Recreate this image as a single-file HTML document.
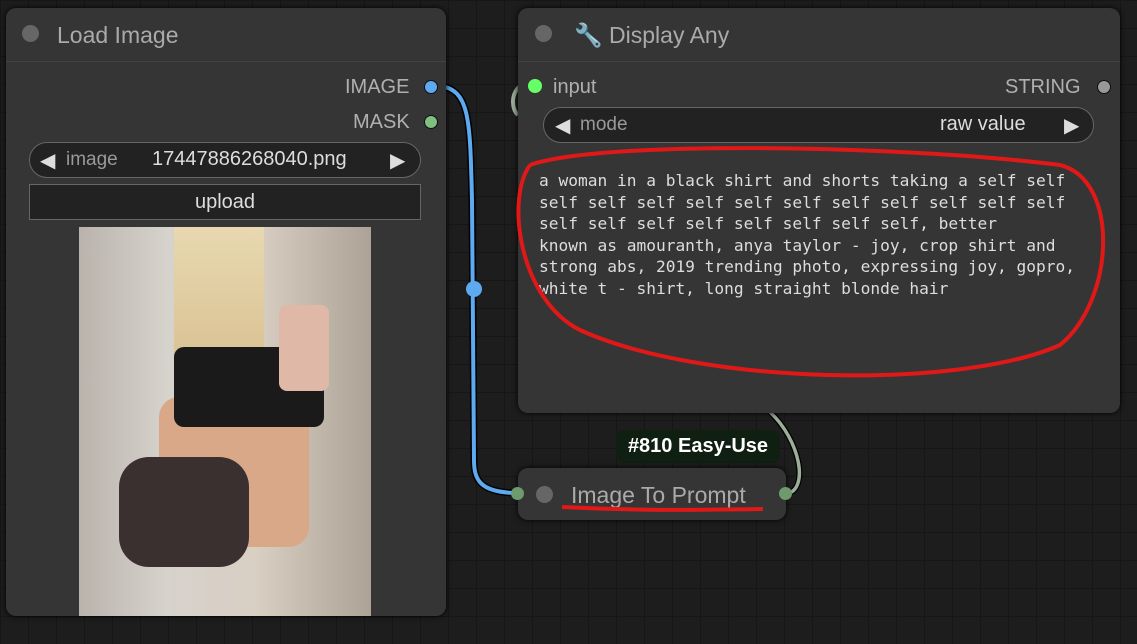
<!DOCTYPE html>
<html><head><style>
body{margin:0;width:1137px;height:644px;overflow:hidden;background:#1d1d1d;
background-image:linear-gradient(#161616 1px,transparent 1px),linear-gradient(90deg,#161616 1px,transparent 1px);background-size:28px 28px;font-family:"Liberation Sans",sans-serif;position:relative}
.node{position:absolute;background:#353535;border-radius:10px;box-shadow:0 0 6px #000}
.t{position:absolute;font-size:23px;color:#aaa}
.dot{position:absolute;border-radius:50%}
.lbl{position:absolute;font-size:20px;color:#b0b0b0}
.mono{font-family:"DejaVu Sans Mono","Liberation Mono",monospace;font-size:16.2px;color:#ddd;line-height:21.5px;position:absolute;left:539px;top:170px;width:560px;white-space:pre}
</style></head><body>
<svg style="position:absolute;left:0;top:0" width="1137" height="644">
<path d="M440 86 C470 90 470 120 472 200 L474 460 C474 480 480 492 515 493" stroke="#000" stroke-width="7" fill="none"/>
<path d="M440 86 C470 90 470 120 472 200 L474 460 C474 480 480 492 515 493" stroke="#5eaaf0" stroke-width="4" fill="none"/>
<circle cx="474" cy="289" r="8" fill="#5eaaf0"/>
<path d="M770 412 C800 440 810 490 786 494" stroke="#000" stroke-width="6" fill="none"/>
<path d="M770 412 C800 440 810 490 786 494" stroke="#9aae98" stroke-width="3.5" fill="none"/>
<path d="M520 86 C510 95 512 110 518 115" stroke="#9aae98" stroke-width="4" fill="none"/>
</svg>
<div class="node" style="left:6px;top:8px;width:440px;height:608px">
<div style="position:absolute;left:0;right:0;top:53px;border-top:1px solid #444"></div></div>
<div class="dot" style="left:22px;top:25px;width:17px;height:17px;background:#666"></div>
<div class="t" style="left:57px;top:22px">Load Image</div>
<div class="lbl" style="left:345px;top:76px">IMAGE</div>
<div class="dot" style="left:424px;top:80px;width:12px;height:12px;background:#5eaaf0;border:1px solid #111"></div>
<div class="lbl" style="left:353px;top:111px">MASK</div>
<div class="dot" style="left:424px;top:115px;width:12px;height:12px;background:#7fbf7f;border:1px solid #111"></div>
<div style="position:absolute;left:29px;top:142px;width:390px;height:34px;border:1px solid #666;border-radius:18px;background:#222"></div>
<div style="position:absolute;left:40px;top:148px;font-size:20px;color:#ddd">◀</div>
<div style="position:absolute;left:66px;top:149px;font-size:19px;color:#999">image</div>
<div style="position:absolute;left:152px;top:148px;font-size:20px;color:#ddd">17447886268040.png</div>
<div style="position:absolute;left:390px;top:148px;font-size:20px;color:#ddd">▶</div>
<div style="position:absolute;left:29px;top:184px;width:390px;height:34px;border:1px solid #666;background:#222;color:#ddd;font-size:20px;text-align:center;line-height:34px">upload</div>
<div style="position:absolute;left:79px;top:227px;width:292px;height:389px;overflow:hidden;background:linear-gradient(90deg,#b9b3ac 0%,#d6d2cc 30%,#d9cfc3 60%,#aca296 100%)">
<div style="position:absolute;left:95px;top:0;width:90px;height:300px;background:linear-gradient(#e8d8b0,#d8c090 50%,transparent)"></div>
<div style="position:absolute;left:80px;top:170px;width:150px;height:150px;background:#d8a888;border-radius:20px"></div>
<div style="position:absolute;left:95px;top:120px;width:150px;height:80px;background:#1a1a1a;border-radius:10px"></div>
<div style="position:absolute;left:40px;top:230px;width:130px;height:110px;background:#3a3030;border-radius:30px"></div>
<div style="position:absolute;left:200px;top:78px;width:50px;height:86px;background:#e0b8a8;border-radius:8px"></div>
</div>
<div class="node" style="left:518px;top:8px;width:602px;height:405px">
<div style="position:absolute;left:0;right:0;top:53px;border-top:1px solid #444"></div></div>
<div class="dot" style="left:535px;top:25px;width:17px;height:17px;background:#666"></div>
<div class="t" style="left:574px;top:22px"><span style="color:#bbb">🔧</span> Display Any</div>
<div class="dot" style="left:528px;top:79px;width:14px;height:14px;background:#6f6"></div>
<div class="lbl" style="left:553px;top:76px">input</div>
<div class="lbl" style="left:1005px;top:76px">STRING</div>
<div class="dot" style="left:1097px;top:80px;width:12px;height:12px;background:#999;border:1px solid #111"></div>
<div style="position:absolute;left:543px;top:107px;width:549px;height:34px;border:1px solid #666;border-radius:18px;background:#222"></div>
<div style="position:absolute;left:555px;top:113px;font-size:20px;color:#ddd">◀</div>
<div style="position:absolute;left:580px;top:114px;font-size:19px;color:#999">mode</div>
<div style="position:absolute;left:940px;top:113px;font-size:20px;color:#ddd">raw value</div>
<div style="position:absolute;left:1064px;top:113px;font-size:20px;color:#ddd">▶</div>
<div class="mono">a woman in a black shirt and shorts taking a self self
self self self self self self self self self self self
self self self self self self self self, better
known as amouranth, anya taylor - joy, crop shirt and
strong abs, 2019 trending photo, expressing joy, gopro,
white t - shirt, long straight blonde hair</div>
<div style="position:absolute;left:616px;top:430px;width:164px;height:33px;background:#0f1f12;border-radius:8px;color:#fff;font-size:20px;font-weight:bold;line-height:33px;text-align:center">#810 Easy-Use</div>
<div class="node" style="left:518px;top:468px;width:268px;height:52px"></div>
<div class="dot" style="left:511px;top:487px;width:13px;height:13px;background:#6e9a6e"></div>
<div class="dot" style="left:779px;top:487px;width:13px;height:13px;background:#6e9a6e"></div>
<div class="dot" style="left:536px;top:486px;width:17px;height:17px;background:#666"></div>
<div class="t" style="left:571px;top:482px">Image To Prompt</div>
<svg style="position:absolute;left:0;top:0" width="1137" height="644">
<path d="M530 165 C600 140 900 145 1060 165 C1120 180 1115 300 1060 345 C960 390 700 385 580 330 C520 300 505 200 530 165" stroke="#e01818" stroke-width="4" fill="none"/>
<path d="M562 507 C640 511 700 510 763 509" stroke="#e01818" stroke-width="4" fill="none"/>
</svg>
</body></html>
